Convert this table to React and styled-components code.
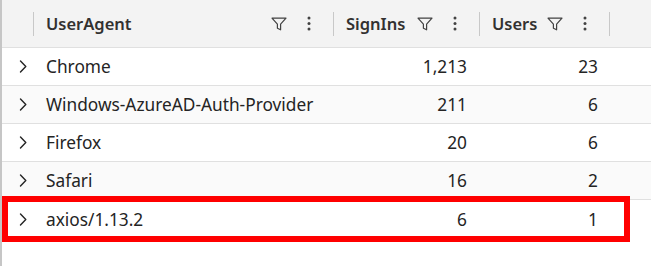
import React from "react";
import styled, { createGlobalStyle } from "styled-components";

const GlobalStyle = createGlobalStyle`
  body {
    margin: 0;
    background: #ffffff;
  }
`;

const Page = styled.div`
  position: relative;
  width: 651px;
  height: 266px;
  box-sizing: border-box;
  border-left: 2px solid #c6c6c6;
  background: #ffffff;
  font-family: "Noto Sans", "Open Sans", sans-serif;
  color: #242424;
  overflow: hidden;
`;

const HeaderRow = styled.div`
  display: grid;
  grid-template-columns: 31px 300px 146px 130px 1fr;
  height: 48px;
  box-sizing: border-box;
  background: #f3f3f3;
  border-bottom: 1px solid #e0e0e0;
`;

const HeaderCell = styled.div`
  display: flex;
  align-items: center;
  padding-right: 9px;
`;

const Separator = styled.div`
  width: 1px;
  height: 24px;
  background: #c8c8c8;
  flex-shrink: 0;
`;

const Title = styled.span`
  flex: 1;
  margin-left: 12px;
  font-size: 16.5px;
  font-weight: 600;
  color: #323130;
  white-space: nowrap;
`;

const IconButton = styled.span`
  width: 30px;
  height: 30px;
  display: flex;
  align-items: center;
  justify-content: center;
  color: #424242;
`;

const Row = styled.div`
  display: grid;
  grid-template-columns: 31px 300px 146px 131px;
  height: 38px;
  box-sizing: border-box;
  border-bottom: ${(p) => (p.$last ? "none" : "1px solid #e0e0e0")};
  background: ${(p) => (p.$alt ? "#fafafa" : "#ffffff")};
`;

const Cell = styled.div`
  display: flex;
  align-items: center;
  justify-content: ${(p) => (p.$num ? "flex-end" : "flex-start")};
  padding: ${(p) => (p.$num ? "0 12px 0 0" : "0 0 0 13px")};
  font-size: 17.3px;
  white-space: nowrap;
`;

const ExpandCell = styled.div`
  display: flex;
  align-items: center;
  padding-left: 17px;
  color: #242424;
`;

const Highlight = styled.div`
  position: absolute;
  left: 0;
  top: 196px;
  width: 628px;
  height: 46px;
  box-sizing: border-box;
  border: 6px solid #ff0000;
  pointer-events: none;
`;

function FilterIcon() {
  return (
    <svg width="16" height="14" viewBox="0 0 16 14" fill="none">
      <path
        d="M1 1.2 H15 L9.6 7.2 V12.8 L6.4 11.2 V7.2 Z"
        stroke="currentColor"
        strokeWidth="1.2"
        strokeLinejoin="round"
      />
    </svg>
  );
}

function MoreIcon() {
  return (
    <svg width="4" height="15" viewBox="0 0 4 15" fill="currentColor">
      <circle cx="2" cy="2" r="1.5" />
      <circle cx="2" cy="7.5" r="1.5" />
      <circle cx="2" cy="13" r="1.5" />
    </svg>
  );
}

function Chevron() {
  return (
    <svg width="8" height="13" viewBox="0 0 8 13" fill="none">
      <path
        d="M1.5 1 L6.8 6.5 L1.5 12"
        stroke="currentColor"
        strokeWidth="1.4"
        strokeLinecap="round"
        strokeLinejoin="round"
      />
    </svg>
  );
}

const columns = ["UserAgent", "SignIns", "Users"];

const rows = [
  { agent: "Chrome", signIns: "1,213", users: "23" },
  { agent: "Windows-AzureAD-Auth-Provider", signIns: "211", users: "6" },
  { agent: "Firefox", signIns: "20", users: "6" },
  { agent: "Safari", signIns: "16", users: "2" },
  { agent: "axios/1.13.2", signIns: "6", users: "1" },
];

export default function App() {
  return (
    <>
      <GlobalStyle />
      <Page>
        <HeaderRow>
          <HeaderCell />
          {columns.map((c) => (
            <HeaderCell key={c}>
              <Separator />
              <Title>{c}</Title>
              <IconButton>
                <FilterIcon />
              </IconButton>
              <IconButton>
                <MoreIcon />
              </IconButton>
            </HeaderCell>
          ))}
          <HeaderCell>
            <Separator />
          </HeaderCell>
        </HeaderRow>
        {rows.map((r, i) => (
          <Row key={r.agent} $alt={i % 2 === 1} $last={i === rows.length - 1}>
            <ExpandCell>
              <Chevron />
            </ExpandCell>
            <Cell>{r.agent}</Cell>
            <Cell $num>{r.signIns}</Cell>
            <Cell $num>{r.users}</Cell>
          </Row>
        ))}
        <Highlight />
      </Page>
    </>
  );
}
